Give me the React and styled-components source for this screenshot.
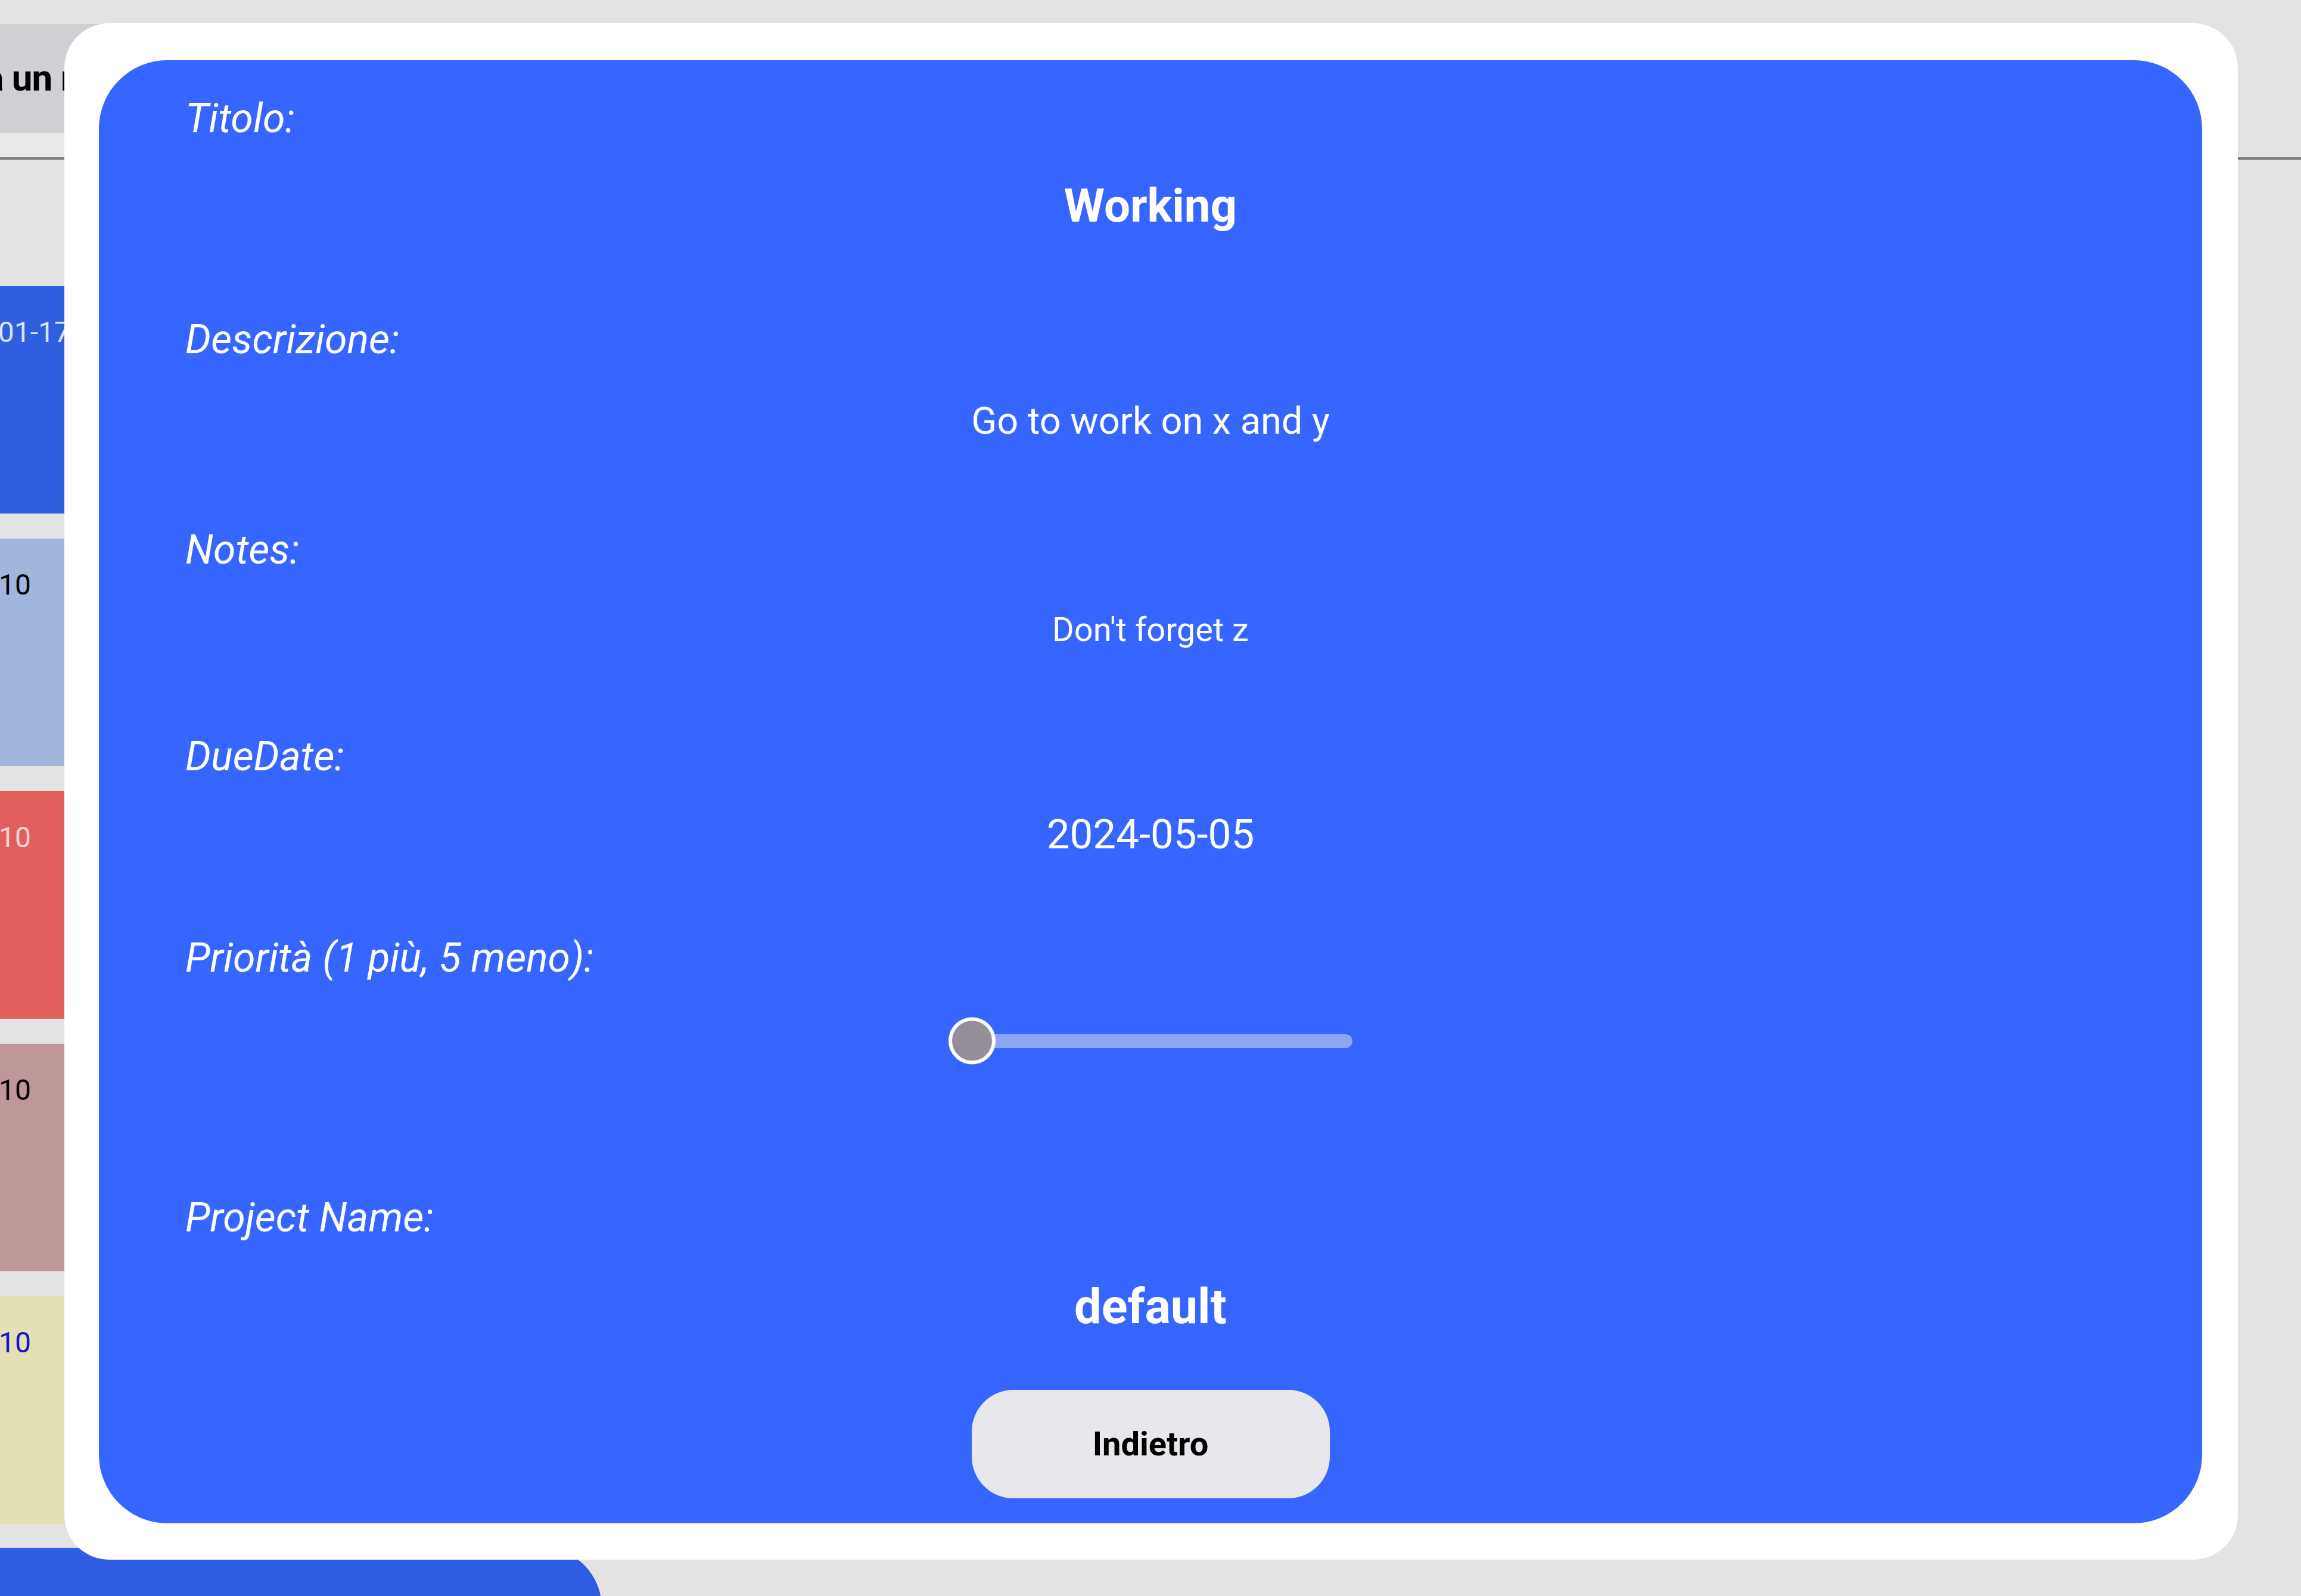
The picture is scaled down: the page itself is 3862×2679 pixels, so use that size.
import styled, { createGlobalStyle } from 'styled-components';

const GlobalStyle = createGlobalStyle`
  html, body {
    margin: 0;
    padding: 0;
  }
  body {
    font-family: Roboto, "Noto Sans", sans-serif;
    background: #e3e3e3;
  }
`;

const Page = styled.div`
  position: relative;
  width: 3862px;
  height: 2679px;
  overflow: hidden;
  background: #e3e3e3;
`;

/* the task list that sits behind the dialog */
const ListScreen = styled.div`
  display: flex;
  flex-direction: column;
  padding-top: 40px;
`;

const HeaderBlock = styled.div`
  display: flex;
  align-items: center;
  width: 2200px;
  height: 183px;
  background: #d0d0d4;
`;

const HeaderTitle = styled.h1`
  margin: 0 0 0 -120px;
  font-size: 62px;
  font-weight: 700;
  line-height: 1.2;
  letter-spacing: -1px;
  color: #000;
  white-space: nowrap;
`;

const HeaderStrip = styled.div`
  width: 2200px;
  height: 41px;
  background: #e9e9e9;
`;

const Divider = styled.div`
  height: 4px;
  background: #7a7a7a;
`;

const CardList = styled.div`
  display: flex;
  flex-direction: column;
  gap: 42px;
  width: 2200px;
  margin-top: 212px;
`;

const Card = styled.div`
  box-sizing: border-box;
  height: 382px;
  padding-top: 49px;
  background: ${({ $bg }) => $bg};
`;

const CardDate = styled.div`
  display: flex;
  justify-content: flex-end;
  width: ${({ $end }) => $end}px;
  font-size: 48px;
  line-height: 1.2;
  color: ${({ $color }) => $color};
  white-space: nowrap;
`;

const AddBar = styled.div`
  width: 1010px;
  height: 200px;
  margin-top: 40px;
  background: #2f5ce2;
  border-radius: 0 100px 0 0;
`;

/* dialog */
const Overlay = styled.div`
  position: absolute;
  inset: 0;
  box-sizing: border-box;
  display: flex;
  padding: 39px 106px 61px 108px;
`;

const Modal = styled.div`
  flex: 1;
  display: flex;
  box-sizing: border-box;
  padding: 62px 60px 61px 58px;
  background: #fff;
  border-radius: 75px;
`;

const Panel = styled.div`
  flex: 1;
  display: flex;
  flex-direction: column;
  box-sizing: border-box;
  padding-top: 58px;
  background: #3666ff;
  border-radius: 115px;
`;

const Field = styled.div`
  display: flex;
  flex-direction: column;
  gap: ${({ $gap }) => $gap}px;
  margin-top: ${({ $top }) => $top}px;
`;

const Label = styled.div`
  padding-left: 145px;
  font-size: 68px;
  font-style: italic;
  line-height: 1.2;
  color: #fff;
`;

const Value = styled.div`
  text-align: center;
  font-size: ${({ $size }) => $size}px;
  font-weight: ${({ $bold }) => ($bold ? 700 : 400)};
  line-height: 1.2;
  color: #fff;
`;

const SliderBox = styled.div`
  position: relative;
  align-self: center;
  display: flex;
  align-items: center;
  width: 678px;
  height: 82px;
`;

const Track = styled.div`
  flex: 1;
  height: 23px;
  margin-left: 39px;
  border-radius: 12px;
  background: #8ca5f5;
`;

const Thumb = styled.div`
  position: absolute;
  left: 0;
  top: 50%;
  transform: translateY(-50%);
  box-sizing: border-box;
  width: 79px;
  height: 79px;
  border: 6px solid #fff;
  border-radius: 50%;
  background: #948f9a;
`;

const BackButton = styled.button`
  align-self: center;
  width: 601px;
  height: 182px;
  margin-top: 91px;
  border: none;
  border-radius: 70px;
  background: #e8e8ec;
  font-family: Roboto, "Noto Sans", sans-serif;
  font-size: 56px;
  font-weight: 700;
  color: #000;
`;

const cards = [
  { bg: '#2f5fe0', color: '#dce4fa', date: '2024-01-17', end: 118 },
  { bg: '#a2b5dd', color: '#000', date: '2024-05-10', end: 52 },
  { bg: '#e35f5c', color: '#f8d8d6', date: '2024-05-10', end: 52 },
  { bg: '#c09798', color: '#000', date: '2024-05-10', end: 52 },
  { bg: '#e3e0b3', color: '#1414cc', date: '2024-05-10', end: 52 },
];

const App = () => (
  <Page>
    <GlobalStyle />
    <ListScreen>
      <HeaderBlock>
        <HeaderTitle>Crea un reminder</HeaderTitle>
      </HeaderBlock>
      <HeaderStrip />
      <Divider />
      <CardList>
        {cards.map((c, i) => (
          <Card key={i} $bg={c.bg}>
            <CardDate $end={c.end} $color={c.color}>{c.date}</CardDate>
          </Card>
        ))}
      </CardList>
      <AddBar />
    </ListScreen>

    <Overlay>
      <Modal>
        <Panel>
          <Field $top={0} $gap={58}>
            <Label>Titolo:</Label>
            <Value $size={78} $bold>Working</Value>
          </Field>
          <Field $top={138} $gap={57}>
            <Label>Descrizione:</Label>
            <Value $size={63}>Go to work on x and y</Value>
          </Field>
          <Field $top={139} $gap={59}>
            <Label>Notes:</Label>
            <Value $size={56}>Don't forget z</Value>
          </Field>
          <Field $top={139} $gap={48}>
            <Label>DueDate:</Label>
            <Value $size={69}>2024-05-05</Value>
          </Field>
          <Field $top={125} $gap={57}>
            <Label>Priorità (1 più, 5 meno):</Label>
            <SliderBox role="slider" aria-valuemin={1} aria-valuemax={5} aria-valuenow={1}>
              <Track />
              <Thumb />
            </SliderBox>
          </Field>
          <Field $top={216} $gap={59}>
            <Label>Project Name:</Label>
            <Value $size={81} $bold>default</Value>
          </Field>
          <BackButton>Indietro</BackButton>
        </Panel>
      </Modal>
    </Overlay>
  </Page>
);

export default App;
